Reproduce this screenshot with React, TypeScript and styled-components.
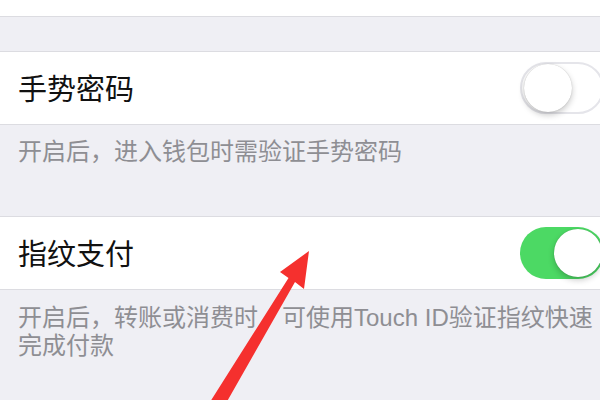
import React from "react";
import styled, { createGlobalStyle } from "styled-components";

const Global = createGlobalStyle`
  html, body { margin: 0; padding: 0; }
  body {
    width: 600px;
    height: 400px;
    overflow: hidden;
    background: #efeff4;
    font-family: "Liberation Sans", "Noto Sans CJK SC", sans-serif;
  }
`;

const Screen = styled.div`
  position: relative;
  width: 600px;
  height: 400px;
  overflow: hidden;
  background: #efeff4;
  display: flex;
  flex-direction: column;
`;

const TopCell = styled.div`
  height: 16px;
  background: #ffffff;
  border-bottom: 1px solid #dcdce1;
`;

const Spacer = styled.div`
  height: 34px;
`;

const Row = styled.div`
  height: 72px;
  background: #ffffff;
  border-top: 1px solid #dcdce1;
  border-bottom: 1px solid #dcdce1;
  display: flex;
  align-items: center;
  justify-content: space-between;
  padding-left: 18px;
  overflow: hidden;
`;

const Title = styled.span`
  font-size: 29px;
  line-height: 34px;
  color: #111111;
  margin-top: 3px;
`;

const Footer = styled.div<{ $bottom: number; $top: number }>`
  padding: ${(p) => p.$top}px 6px ${(p) => p.$bottom}px 18px;
  font-size: 24px;
  line-height: 28px;
  color: #8e8e93;
`;

const Track = styled.div<{ $on: boolean }>`
  box-sizing: border-box;
  width: 84px;
  height: 52px;
  margin-right: -4px;
  border-radius: 26px;
  display: flex;
  align-items: center;
  justify-content: ${(p) => (p.$on ? "flex-end" : "flex-start")};
  padding: 0 2px;
  background: ${(p) => (p.$on ? "#4cd964" : "#ffffff")};
  border: ${(p) => (p.$on ? "none" : "2px solid #e5e5ea")};
  flex-shrink: 0;
`;

const Knob = styled.div`
  width: 48px;
  height: 48px;
  border-radius: 50%;
  background: #ffffff;
  box-shadow: 0 3px 6px rgba(0, 0, 0, 0.22), 0 0 1px rgba(0, 0, 0, 0.25);
`;

const ArrowLayer = styled.svg`
  position: absolute;
  left: 0;
  top: 0;
  pointer-events: none;
`;

function Toggle({ on }: { on: boolean }) {
  return (
    <Track $on={on}>
      <Knob />
    </Track>
  );
}

export default function App() {
  return (
    <>
      <Global />
      <Screen>
        <TopCell />
        <Spacer />
        <Row>
          <Title>手势密码</Title>
          <Toggle on={false} />
        </Row>
        <Footer $top={13} $bottom={50}>开启后，进入钱包时需验证手势密码</Footer>
        <Row>
          <Title>指纹支付</Title>
          <Toggle on={true} />
        </Row>
        <Footer $top={14} $bottom={20}>
          开启后，转账或消费时，可使用Touch ID验证指纹快速完成付款
        </Footer>
        <ArrowLayer width="600" height="400" viewBox="0 0 600 400">
          <polygon
            points="309,251 280,272 288.5,278 210,402 225,405 295,282 304,289"
            fill="#f5302e"
          />
        </ArrowLayer>
      </Screen>
    </>
  );
}
